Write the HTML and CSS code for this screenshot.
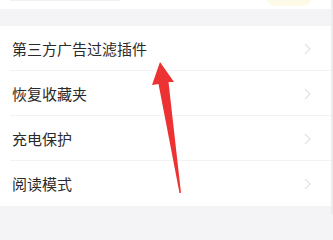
FILE: index.html
```html
<!DOCTYPE html>
<html lang="zh">
<head>
<meta charset="utf-8">
<link rel="stylesheet" href="styles.css">
</head>
<body>
<div class="page">
  <div class="top"><span class="top-trace"></span><span class="top-pill"></span></div>
  <div class="gap"></div>
  <div class="card">
    <div class="row"><span class="label">第三方广告过滤插件</span><svg class="chev" width="7" height="12" viewBox="0 0 7 12"><path d="M1 1 L6 6 L1 11" fill="none" stroke="#e2e2e4" stroke-width="1.2"/></svg></div>
    <div class="row"><span class="label">恢复收藏夹</span><svg class="chev" width="7" height="12" viewBox="0 0 7 12"><path d="M1 1 L6 6 L1 11" fill="none" stroke="#e2e2e4" stroke-width="1.2"/></svg></div>
    <div class="row"><span class="label">充电保护</span><svg class="chev" width="7" height="12" viewBox="0 0 7 12"><path d="M1 1 L6 6 L1 11" fill="none" stroke="#e2e2e4" stroke-width="1.2"/></svg></div>
    <div class="row last"><span class="label">阅读模式</span><svg class="chev" width="7" height="12" viewBox="0 0 7 12"><path d="M1 1 L6 6 L1 11" fill="none" stroke="#e2e2e4" stroke-width="1.2"/></svg></div>
  </div>
  <svg class="arrow" width="333" height="214" viewBox="0 0 333 214">
    <polygon points="160,62 174,82 168.5,82 181,193 179.5,193 158.5,84 152,85" fill="#ec3232"/>
  </svg>
  <div class="edge"></div>
</div>
</body>
</html>
```
FILE: styles.css
```css
html, body {
  margin: 0;
  padding: 0;
}
body {
  width: 333px;
  height: 214px;
  overflow: hidden;
  background: #f4f4f6;
  font-family: "Noto Sans CJK SC", "Noto Sans", sans-serif;
}
.page {
  position: relative;
  width: 333px;
  height: 214px;
}
.top {
  height: 9px;
  background: #fff;
  overflow: hidden;
  position: relative;
}
.top-trace {
  position: absolute;
  left: 10px;
  top: 0;
  width: 110px;
  height: 1px;
  background: #f0f0f0;
}
.top-pill {
  position: absolute;
  left: 266px;
  top: -12px;
  width: 46px;
  height: 18px;
  border-radius: 9px;
  background: #fefae8;
}
.gap {
  height: 17px;
}
.card {
  background: #fff;
}
.row {
  height: 45px;
  box-sizing: border-box;
  display: flex;
  align-items: center;
  justify-content: space-between;
  padding: 0 22px 0 12px;
  position: relative;
}
.row::after {
  content: "";
  position: absolute;
  left: 10px;
  right: 0;
  bottom: 0;
  height: 1px;
  background: #f3f3f5;
}
.row.last::after {
  display: none;
}
.label {
  font-size: 15px;
  color: #2a2a2a;
  line-height: 1;
}
.chev {
  display: block;
}
.arrow {
  position: absolute;
  left: 0;
  top: 0;
}
.edge {
  position: absolute;
  right: 0;
  top: 0;
  width: 2px;
  height: 214px;
  background: #ececee;
}
```
